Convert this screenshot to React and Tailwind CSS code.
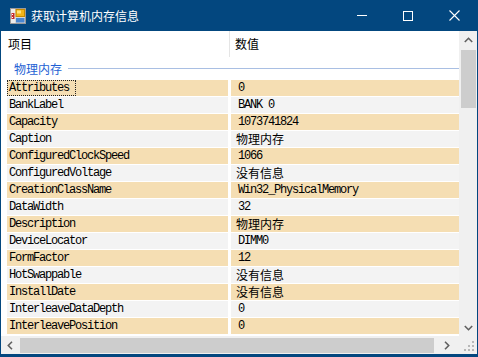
import React from "react";

const rows = [
  ["Attributes", "0"],
  ["BankLabel", "BANK 0"],
  ["Capacity", "1073741824"],
  ["Caption", "物理内存"],
  ["ConfiguredClockSpeed", "1066"],
  ["ConfiguredVoltage", "没有信息"],
  ["CreationClassName", "Win32_PhysicalMemory"],
  ["DataWidth", "32"],
  ["Description", "物理内存"],
  ["DeviceLocator", "DIMM0"],
  ["FormFactor", "12"],
  ["HotSwappable", "没有信息"],
  ["InstallDate", "没有信息"],
  ["InterleaveDataDepth", "0"],
  ["InterleavePosition", "0"],
];

const isCJK = (s) => /[\u4e00-\u9fff]/.test(s);

const mono = { fontFamily: '"Liberation Mono", "DejaVu Sans Mono", monospace' };
const cjk = { fontFamily: '"Noto Sans CJK SC", "Noto Sans", sans-serif' };

function Cell({ text, focus }) {
  if (isCJK(text)) {
    return (
      <span className="text-[12px] leading-[16px] text-black" style={cjk}>
        {text}
      </span>
    );
  }
  return (
    <span
      className={
        "text-[12px] leading-[14px] tracking-[-1.2px] text-black pl-[1px] pr-[6px] " +
        (focus ? "border border-dotted border-[#222]" : "border border-transparent")
      }
      style={mono}
    >
      {text}
    </span>
  );
}

export default function App() {
  return (
    <div className="w-[478px] h-[357px] bg-[#03477f] flex flex-col px-[1px] pb-[3px] overflow-hidden">
      {/* title bar */}
      <div className="h-[31px] flex items-center shrink-0">
        <svg width="16" height="16" viewBox="0 0 16 16" className="ml-[9px] mt-[1px]">
          <rect x="0.5" y="0.5" width="15" height="15" fill="#d8d8d8" stroke="#9a9a9a" />
          <rect x="1" y="1" width="4" height="14" fill="#ececec" />
          <rect x="1.5" y="5" width="3" height="6" fill="#c62828" />
          <rect x="2" y="6" width="1" height="1" fill="#fff" />
          <rect x="2" y="9" width="1" height="1" fill="#fff" />
          <rect x="6" y="1.5" width="8.5" height="7" fill="#f2b418" stroke="#c58a00" strokeWidth="1" />
          <rect x="7" y="2.5" width="4" height="3" fill="#ffe27a" />
          <rect x="6" y="10" width="8.5" height="4.5" fill="#4a86d0" />
        </svg>
        <span className="ml-[5px] text-white text-[12px] leading-[16px]" style={cjk}>
          获取计算机内存信息
        </span>
        <div className="flex-1" />
        <div className="w-[46px] h-[30px] flex items-center justify-center">
          <div className="w-[10px] h-[1px] bg-white" />
        </div>
        <div className="w-[46px] h-[30px] flex items-center justify-center">
          <div className="w-[10px] h-[10px] border border-white" />
        </div>
        <div className="w-[46px] h-[30px] flex items-center justify-center">
          <svg width="11" height="11" viewBox="0 0 11 11">
            <path d="M0.5 0.5 L10.5 10.5 M10.5 0.5 L0.5 10.5" stroke="#fff" strokeWidth="1.1" />
          </svg>
        </div>
      </div>

      {/* client */}
      <div className="flex-1 bg-white grid grid-cols-[1fr_18px] grid-rows-[1fr_18px] min-h-0">
        <div className="flex flex-col min-h-0 overflow-hidden">
          <div className="h-[26px] flex shrink-0">
            <div className="w-[229px] flex items-center pl-[7px] border-r border-[#e5e5e5]">
              <span className="text-[12px] text-black" style={cjk}>项目</span>
            </div>
            <div className="flex-1 flex items-center pl-[5px]">
              <span className="text-[12px] text-black" style={cjk}>数值</span>
            </div>
          </div>
          <div className="h-[23px] flex items-center shrink-0">
            <span className="ml-[13px] text-[12px] leading-[16px] text-[#1e5fd4]" style={cjk}>
              物理内存
            </span>
            <div className="flex-1 h-[1px] bg-[#a9bfe3] ml-[6px] -mt-[1px]" />
          </div>
          {rows.map(([k, v], i) => {
            const bg = i % 2 === 0 ? "bg-[#f5deb3]" : "bg-[#f3f3f3]";
            return (
              <div key={k} className="flex h-[16px] mb-[1px] shrink-0">
                <div className={"ml-[6px] w-[221px] flex items-center " + bg}>
                  <Cell text={k} focus={i === 0} />
                </div>
                <div className={"ml-[3px] flex-1 flex items-center pl-[5px] " + bg}>
                  <Cell text={v} />
                </div>
              </div>
            );
          })}
        </div>

        <div className="bg-[#f0f0f0] flex flex-col items-center">
          <div className="h-[17px] w-full flex items-center justify-center">
            <svg width="9" height="6" viewBox="0 0 9 6">
              <path d="M0.8 5 L4.5 1.3 L8.2 5" stroke="#606060" strokeWidth="1.6" fill="none" />
            </svg>
          </div>
          <div className="w-[15px] h-[58px] mt-[2px] bg-[#cdcdcd]" />
          <div className="flex-1" />
          <div className="h-[17px] w-full flex items-center justify-center">
            <svg width="9" height="6" viewBox="0 0 9 6">
              <path d="M0.8 1 L4.5 4.7 L8.2 1" stroke="#606060" strokeWidth="1.6" fill="none" />
            </svg>
          </div>
        </div>

        <div className="bg-[#f0f0f0] flex items-center">
          <div className="w-[18px] h-full flex items-center justify-center">
            <svg width="6" height="9" viewBox="0 0 6 9">
              <path d="M5 0.8 L1.3 4.5 L5 8.2" stroke="#606060" strokeWidth="1.6" fill="none" />
            </svg>
          </div>
          <div className="h-[15px] w-[414px] ml-[1px] bg-[#cdcdcd]" />
          <div className="flex-1 h-full flex items-center justify-center">
            <svg width="6" height="9" viewBox="0 0 6 9">
              <path d="M1 0.8 L4.7 4.5 L1 8.2" stroke="#606060" strokeWidth="1.6" fill="none" />
            </svg>
          </div>
        </div>

        <div className="bg-[#f0f0f0] flex items-end justify-end p-[3px]">
          <svg width="10" height="10" viewBox="0 0 10 10">
            <rect x="8" y="0" width="2" height="2" fill="#b8b8b8" />
            <rect x="4" y="4" width="2" height="2" fill="#b8b8b8" />
            <rect x="8" y="4" width="2" height="2" fill="#b8b8b8" />
            <rect x="0" y="8" width="2" height="2" fill="#b8b8b8" />
            <rect x="4" y="8" width="2" height="2" fill="#b8b8b8" />
            <rect x="8" y="8" width="2" height="2" fill="#b8b8b8" />
          </svg>
        </div>
      </div>
    </div>
  );
}
